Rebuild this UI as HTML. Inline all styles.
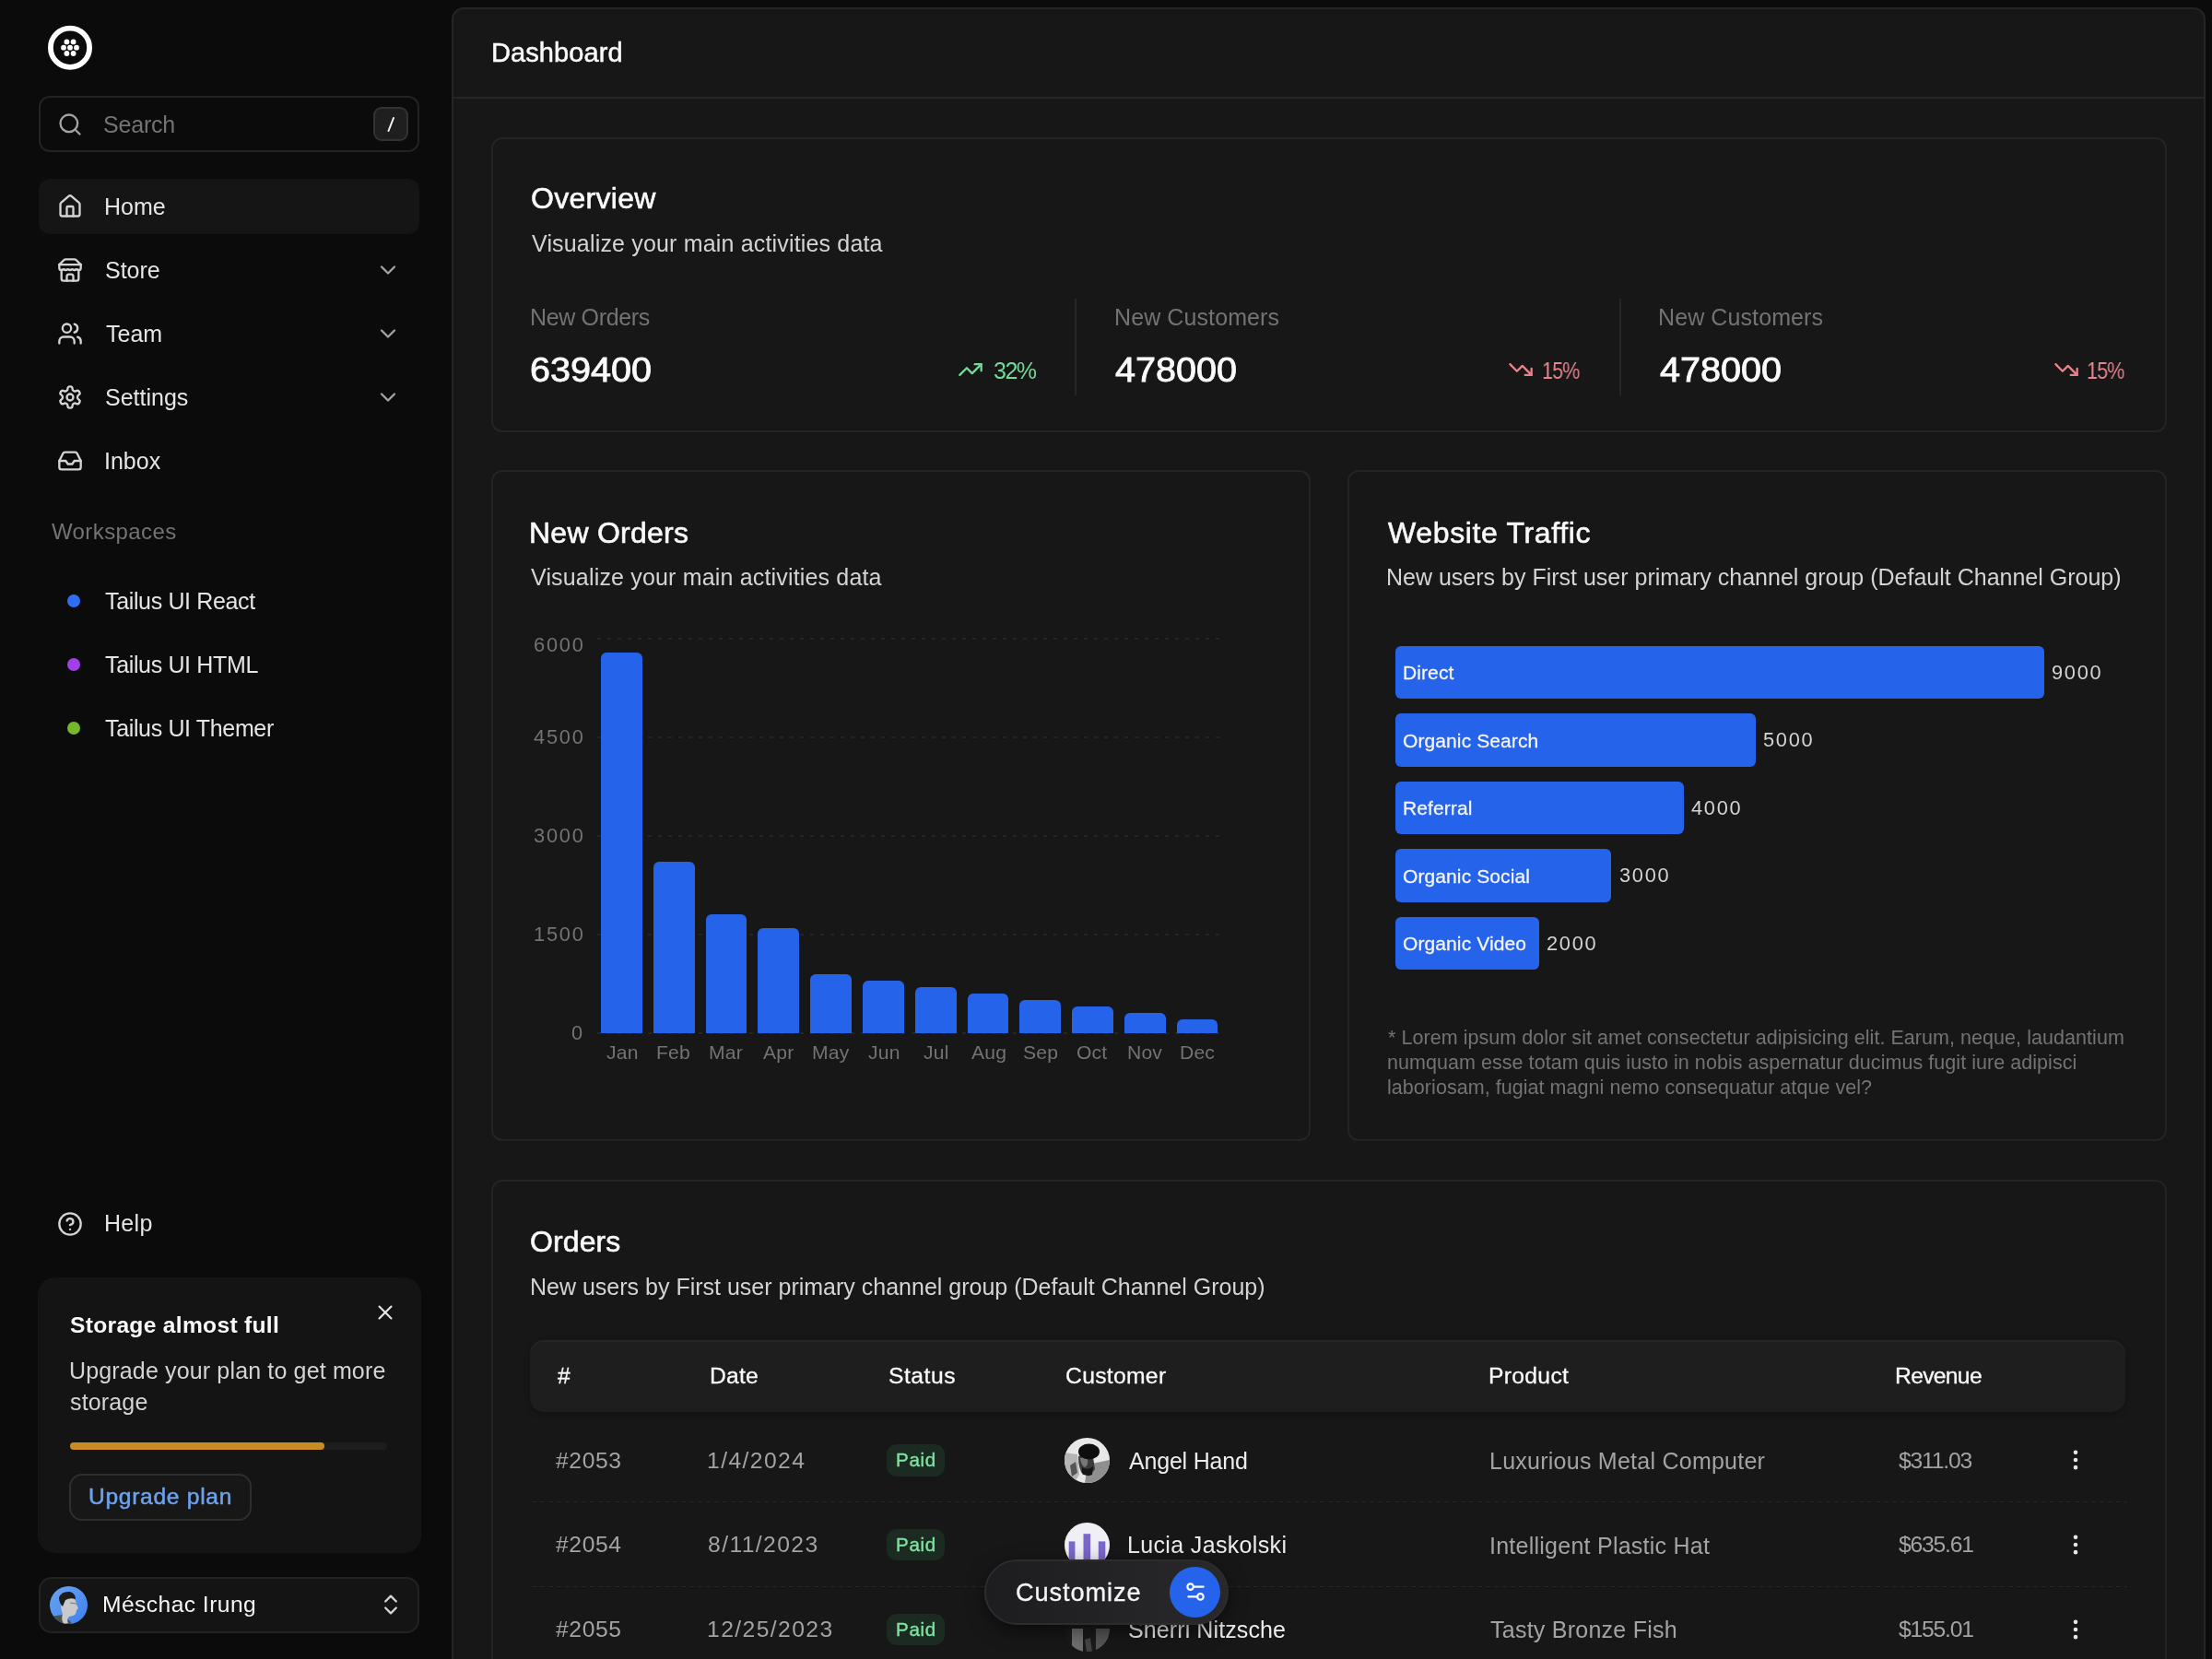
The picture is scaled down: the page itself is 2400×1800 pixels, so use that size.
<!DOCTYPE html>
<html><head><meta charset="utf-8"><style>
html,body{margin:0;padding:0;width:2400px;height:1800px;overflow:hidden;background:#0b0b0b;}
body{position:relative;font-family:"Liberation Sans",sans-serif;}
body>div{position:absolute;}
.t{white-space:pre;will-change:transform;}
</style></head><body><svg style="position:absolute;left:46px;top:22px" width="60" height="60" viewBox="0 0 60 60"><circle cx="30" cy="29.7" r="21.1" fill="none" stroke="#fff" stroke-width="5.8"/><circle cx="30" cy="29.7" r="2.9" fill="#fff"/><circle cx="23" cy="29.7" r="2.9" fill="#fff"/><circle cx="37" cy="29.7" r="2.9" fill="#fff"/><circle cx="26.4" cy="23.4" r="2.9" fill="#fff"/><circle cx="33.6" cy="23.4" r="2.9" fill="#fff"/><circle cx="26.4" cy="36.0" r="2.9" fill="#fff"/><circle cx="33.6" cy="36.0" r="2.9" fill="#fff"/></svg><div style="left:42px;top:104px;width:413px;height:61px;box-sizing:border-box;border:2px solid #232323;border-radius:12px;background:#0b0b0b"></div><svg style="position:absolute;left:61.5px;top:120.5px;" width="28" height="28" viewBox="0 0 24 24" fill="none" stroke="#a3a3a3" stroke-width="2" stroke-linecap="round" stroke-linejoin="round"><circle cx="11" cy="11" r="8"/><path d="m21 21-4.3-4.3"/></svg><div class="t" style="left:112.46px;top:118.53px;font-size:25px;line-height:32px;color:#737373;letter-spacing:-0.2px;">Search</div><div style="left:405px;top:116px;width:38px;height:37px;box-sizing:border-box;border:2px solid #333;border-radius:9px;background:#1f1f1f"></div><svg style="position:absolute;left:405px;top:116px" width="38" height="37"><line x1="22" y1="12" x2="16.5" y2="26" stroke="#f5f5f5" stroke-width="2" stroke-linecap="round"/></svg><div style="left:42px;top:194px;width:413px;height:60px;border-radius:12px;background:#151515"></div><svg style="position:absolute;left:62px;top:210px;" width="28" height="28" viewBox="0 0 24 24" fill="none" stroke="#d4d4d4" stroke-width="2" stroke-linecap="round" stroke-linejoin="round"><path d="M15 21v-8a1 1 0 0 0-1-1h-4a1 1 0 0 0-1 1v8"/><path d="M3 10a2 2 0 0 1 .709-1.528l7-5.999a2 2 0 0 1 2.582 0l7 5.999A2 2 0 0 1 21 10v9a2 2 0 0 1-2 2H5a2 2 0 0 1-2-2z"/></svg><div class="t" style="left:113.25px;top:207.83px;font-size:25px;line-height:32px;color:#e5e5e5;letter-spacing:0px;">Home</div><svg style="position:absolute;left:62px;top:279px;" width="28" height="28" viewBox="0 0 24 24" fill="none" stroke="#d4d4d4" stroke-width="2" stroke-linecap="round" stroke-linejoin="round"><path d="m2 7 4.41-4.41A2 2 0 0 1 7.83 2h8.34a2 2 0 0 1 1.42.59L22 7"/><path d="M4 12v8a2 2 0 0 0 2 2h12a2 2 0 0 0 2-2v-8"/><path d="M15 22v-4a2 2 0 0 0-2-2h-2a2 2 0 0 0-2 2v4"/><path d="M2 7h20"/><path d="M22 7v3a2 2 0 0 1-2 2a2.7 2.7 0 0 1-1.59-.63.7.7 0 0 0-.82 0A2.7 2.7 0 0 1 16 12a2.7 2.7 0 0 1-1.59-.63.7.7 0 0 0-.82 0A2.7 2.7 0 0 1 12 12a2.7 2.7 0 0 1-1.59-.63.7.7 0 0 0-.82 0A2.7 2.7 0 0 1 8 12a2.7 2.7 0 0 1-1.59-.63.7.7 0 0 0-.82 0A2.7 2.7 0 0 1 4 12a2 2 0 0 1-2-2V7"/></svg><div class="t" style="left:114.16px;top:276.83px;font-size:25px;line-height:32px;color:#e5e5e5;letter-spacing:0px;">Store</div><svg style="position:absolute;left:406.7px;top:279px;" width="28" height="28" viewBox="0 0 24 24" fill="none" stroke="#a3a3a3" stroke-width="2" stroke-linecap="round" stroke-linejoin="round"><path d="m6 9 6 6 6-6"/></svg><svg style="position:absolute;left:62px;top:348px;" width="28" height="28" viewBox="0 0 24 24" fill="none" stroke="#d4d4d4" stroke-width="2" stroke-linecap="round" stroke-linejoin="round"><path d="M16 21v-2a4 4 0 0 0-4-4H6a4 4 0 0 0-4 4v2"/><circle cx="9" cy="7" r="4"/><path d="M22 21v-2a4 4 0 0 0-3-3.87"/><path d="M16 3.13a4 4 0 0 1 0 7.75"/></svg><div class="t" style="left:114.74px;top:345.83px;font-size:25px;line-height:32px;color:#e5e5e5;letter-spacing:0px;">Team</div><svg style="position:absolute;left:406.7px;top:348px;" width="28" height="28" viewBox="0 0 24 24" fill="none" stroke="#a3a3a3" stroke-width="2" stroke-linecap="round" stroke-linejoin="round"><path d="m6 9 6 6 6-6"/></svg><svg style="position:absolute;left:62px;top:417px;" width="28" height="28" viewBox="0 0 24 24" fill="none" stroke="#d4d4d4" stroke-width="2" stroke-linecap="round" stroke-linejoin="round"><path d="M12.22 2h-.44a2 2 0 0 0-2 2v.18a2 2 0 0 1-1 1.73l-.43.25a2 2 0 0 1-2 0l-.15-.08a2 2 0 0 0-2.73.73l-.22.38a2 2 0 0 0 .73 2.73l.15.1a2 2 0 0 1 1 1.72v.51a2 2 0 0 1-1 1.74l-.15.09a2 2 0 0 0-.73 2.73l.22.38a2 2 0 0 0 2.73.73l.15-.08a2 2 0 0 1 2 0l.43.25a2 2 0 0 1 1 1.73V20a2 2 0 0 0 2 2h.44a2 2 0 0 0 2-2v-.18a2 2 0 0 1 1-1.73l.43-.25a2 2 0 0 1 2 0l.15.08a2 2 0 0 0 2.73-.73l.22-.39a2 2 0 0 0-.73-2.73l-.15-.08a2 2 0 0 1-1-1.74v-.5a2 2 0 0 1 1-1.74l.15-.09a2 2 0 0 0 .73-2.73l-.22-.38a2 2 0 0 0-2.73-.73l-.15.08a2 2 0 0 1-2 0l-.43-.25a2 2 0 0 1-1-1.73V4a2 2 0 0 0-2-2z"/><circle cx="12" cy="12" r="3"/></svg><div class="t" style="left:114.16px;top:414.83px;font-size:25px;line-height:32px;color:#e5e5e5;letter-spacing:0px;">Settings</div><svg style="position:absolute;left:406.7px;top:417px;" width="28" height="28" viewBox="0 0 24 24" fill="none" stroke="#a3a3a3" stroke-width="2" stroke-linecap="round" stroke-linejoin="round"><path d="m6 9 6 6 6-6"/></svg><svg style="position:absolute;left:62px;top:486.3px;" width="28" height="28" viewBox="0 0 24 24" fill="none" stroke="#d4d4d4" stroke-width="2" stroke-linecap="round" stroke-linejoin="round"><polyline points="22 12 16 12 14 15 10 15 8 12 2 12"/><path d="M5.45 5.11 2 12v6a2 2 0 0 0 2 2h16a2 2 0 0 0 2-2v-6l-3.45-6.89A2 2 0 0 0 16.76 4H7.24a2 2 0 0 0-1.79 1.11z"/></svg><div class="t" style="left:112.99px;top:484.13px;font-size:25px;line-height:32px;color:#e5e5e5;letter-spacing:0px;">Inbox</div><div class="t" style="left:56.19px;top:560.68px;font-size:24px;line-height:31px;color:#737373;letter-spacing:0.4px;">Workspaces</div><div style="left:72.5px;top:644.9px;width:14px;height:14px;border-radius:50%;background:#2f6df6"></div><div class="t" style="left:114.44px;top:635.83px;font-size:25px;line-height:32px;color:#e5e5e5;letter-spacing:-0.35px;">Tailus UI React</div><div style="left:72.5px;top:713.8px;width:14px;height:14px;border-radius:50%;background:#a23fe8"></div><div class="t" style="left:114.44px;top:704.73px;font-size:25px;line-height:32px;color:#e5e5e5;letter-spacing:-0.35px;">Tailus UI HTML</div><div style="left:72.5px;top:782.8px;width:14px;height:14px;border-radius:50%;background:#77b72c"></div><div class="t" style="left:114.44px;top:773.73px;font-size:25px;line-height:32px;color:#e5e5e5;letter-spacing:-0.35px;">Tailus UI Themer</div><svg style="position:absolute;left:61.7px;top:1313.5px;" width="28" height="28" viewBox="0 0 24 24" fill="none" stroke="#d4d4d4" stroke-width="2" stroke-linecap="round" stroke-linejoin="round"><circle cx="12" cy="12" r="10"/><path d="M9.09 9a3 3 0 0 1 5.83 1c0 2-3 3-3 3"/><path d="M12 17h.01"/></svg><div class="t" style="left:113.45px;top:1311.43px;font-size:25px;line-height:32px;color:#e5e5e5;letter-spacing:0.3px;">Help</div><div style="left:42px;top:1387px;width:414px;height:297px;border-radius:18px;background:#141414;box-shadow:0 0 0 1px #161616"></div><div class="t" style="left:75.99px;top:1422.07px;font-size:24.6px;line-height:32px;color:#fafafa;letter-spacing:0.3px;font-weight:700;">Storage almost full</div><svg style="position:absolute;left:404.5px;top:1411.3px;" width="26" height="26" viewBox="0 0 24 24" fill="none" stroke="#e5e5e5" stroke-width="1.9" stroke-linecap="round" stroke-linejoin="round"><path d="M18 6 6 18"/><path d="m6 6 12 12"/></svg><div class="t" style="left:74.77px;top:1470.63px;font-size:25px;line-height:32px;color:#d4d4d4;letter-spacing:0.15px;">Upgrade your plan to get more</div><div class="t" style="left:76.00px;top:1504.53px;font-size:25px;line-height:32px;color:#d4d4d4;letter-spacing:0.15px;">storage</div><div style="left:75.8px;top:1565px;width:344.2px;height:8px;border-radius:4px;background:#1d1d1d"></div><div style="left:75.8px;top:1565px;width:276.5px;height:8px;border-radius:4px;background:#c98c24"></div><div style="left:75px;top:1599px;width:198px;height:51px;box-sizing:border-box;border:2px solid #2e2e2e;border-radius:14px;background:#171717"></div><div class="t" style="left:95.70px;top:1608.07px;font-size:24.6px;line-height:32px;color:#6ea2ec;letter-spacing:0.7px;-webkit-text-stroke:0.5px #6ea2ec">Upgrade plan</div><div style="left:42px;top:1711px;width:413px;height:61px;box-sizing:border-box;border:2px solid #222;border-radius:14px;background:#141414"></div><svg style="position:absolute;left:53.5px;top:1720.5px" width="41" height="41" viewBox="0 0 41 41"><defs><clipPath id="ca"><circle cx="20.5" cy="20.5" r="20.5"/></clipPath><linearGradient id="gb" x1="0" y1="0" x2="1" y2="1"><stop offset="0" stop-color="#6aa6f2"/><stop offset="1" stop-color="#3d7ff0"/></linearGradient></defs><circle cx="20.5" cy="20.5" r="20.5" fill="url(#gb)"/><g clip-path="url(#ca)"><path d="M0 33 L14 31 L22 38 L24 41 L0 41z" fill="#4a4f4a"/><path d="M13 15 Q16 11 24 12 Q29 15 29 20 L31 24 L29 26 Q29 31 25 32 L21 33 Q18 36 20 40 L15 41 Q12 36 14 30 Q11 24 13 15z" fill="#c9cbcb"/><path d="M10 12 Q13 5 22 6 Q28 8 28 14 Q22 12 17 15 L14 22 Q10 18 10 12z" fill="#1b1c1e"/><path d="M22 18 L29 19" stroke="#777" stroke-width="1"/></g></svg><div class="t" style="left:111.48px;top:1725.17px;font-size:24.6px;line-height:32px;color:#f5f5f5;letter-spacing:0.45px;">Méschac Irung</div><svg style="position:absolute;left:410px;top:1727px;" width="28" height="28" viewBox="0 0 24 24" fill="none" stroke="#d4d4d4" stroke-width="2" stroke-linecap="round" stroke-linejoin="round"><path d="m7 15 5 5 5-5"/><path d="m7 9 5-5 5 5"/></svg><div style="left:490px;top:8px;width:1903px;height:1800px;box-sizing:border-box;border:2px solid #252525;border-bottom:none;border-radius:13px 13px 0 0;background:#171717"></div><div style="left:492px;top:105px;width:1899px;height:2px;background:#262626"></div><div class="t" style="left:532.52px;top:37.55px;font-size:29px;line-height:38px;color:#fafafa;letter-spacing:0.1px;-webkit-text-stroke:0.5px #fafafa">Dashboard</div><div style="left:533px;top:149px;width:1818px;height:320px;box-sizing:border-box;border:2px solid #242424;border-radius:12px;background:#171717"></div><div class="t" style="left:575.68px;top:194.11px;font-size:32px;line-height:42px;color:#fafafa;letter-spacing:0.3px;-webkit-text-stroke:0.6px #fafafa">Overview</div><div class="t" style="left:576.89px;top:247.63px;font-size:25px;line-height:32px;color:#d4d4d4;letter-spacing:0.17px;">Visualize your main activities data</div><div class="t" style="left:574.95px;top:327.93px;font-size:25px;line-height:32px;color:#737373;letter-spacing:-0.35px;">New Orders</div><div class="t" style="left:575.17px;top:378.02px;font-size:36px;line-height:47px;color:#fafafa;letter-spacing:0px;transform:scaleX(1.10);transform-origin:0 0;-webkit-text-stroke:0.8px #fafafa">639400</div><svg style="position:absolute;left:1038.8px;top:387px;" width="28" height="28" viewBox="0 0 24 24" fill="none" stroke="#74d897" stroke-width="2" stroke-linecap="round" stroke-linejoin="round"><polyline points="22 7 13.5 15.5 8.5 10.5 2 17"/><polyline points="16 7 22 7 22 13"/></svg><div class="t" style="left:1077.85px;top:385.83px;font-size:25px;line-height:32px;color:#74d897;letter-spacing:-1.5px;">32%</div><div class="t" style="left:1208.75px;top:327.93px;font-size:25px;line-height:32px;color:#737373;letter-spacing:0.1px;">New Customers</div><div class="t" style="left:1209.97px;top:378.02px;font-size:36px;line-height:47px;color:#fafafa;letter-spacing:0px;transform:scaleX(1.10);transform-origin:0 0;-webkit-text-stroke:0.8px #fafafa">478000</div><svg style="position:absolute;left:1636.3px;top:387px;" width="28" height="28" viewBox="0 0 24 24" fill="none" stroke="#e5838f" stroke-width="2" stroke-linecap="round" stroke-linejoin="round"><polyline points="22 17 13.5 8.5 8.5 13.5 2 7"/><polyline points="16 17 22 17 22 11"/></svg><div class="t" style="left:1673.30px;top:385.83px;font-size:25px;line-height:32px;color:#e5838f;letter-spacing:-1.0px;transform:scaleX(0.86);transform-origin:0 0">15%</div><div class="t" style="left:1799.35px;top:327.93px;font-size:25px;line-height:32px;color:#737373;letter-spacing:0.1px;">New Customers</div><div class="t" style="left:1800.57px;top:378.02px;font-size:36px;line-height:47px;color:#fafafa;letter-spacing:0px;transform:scaleX(1.10);transform-origin:0 0;-webkit-text-stroke:0.8px #fafafa">478000</div><svg style="position:absolute;left:2228.1000000000004px;top:387px;" width="28" height="28" viewBox="0 0 24 24" fill="none" stroke="#e5838f" stroke-width="2" stroke-linecap="round" stroke-linejoin="round"><polyline points="22 17 13.5 8.5 8.5 13.5 2 7"/><polyline points="16 17 22 17 22 11"/></svg><div class="t" style="left:2263.60px;top:385.83px;font-size:25px;line-height:32px;color:#e5838f;letter-spacing:-1.0px;transform:scaleX(0.86);transform-origin:0 0">15%</div><div style="left:1166.4px;top:323.6px;width:2px;height:105px;background:#262626"></div><div style="left:1757.4px;top:323.6px;width:2px;height:105px;background:#262626"></div><div style="left:533px;top:510px;width:889px;height:728px;box-sizing:border-box;border:2px solid #242424;border-radius:12px;background:#171717"></div><div class="t" style="left:573.88px;top:556.91px;font-size:32px;line-height:42px;color:#fafafa;letter-spacing:0.25px;-webkit-text-stroke:0.6px #fafafa">New Orders</div><div class="t" style="left:576.39px;top:610.03px;font-size:25px;line-height:32px;color:#d4d4d4;letter-spacing:0.17px;">Visualize your main activities data</div><div style="left:648px;top:692.3px;width:677px;height:2px;background:repeating-linear-gradient(90deg,#252525 0 4px,transparent 4px 11px)"></div><div class="t" style="left:578.66px;top:686.24px;font-size:21.8px;line-height:28px;color:#737373;letter-spacing:1.8px;">6000</div><div style="left:648px;top:799.2px;width:677px;height:2px;background:repeating-linear-gradient(90deg,#252525 0 4px,transparent 4px 11px)"></div><div class="t" style="left:578.66px;top:786.49px;font-size:21.8px;line-height:28px;color:#737373;letter-spacing:1.8px;">4500</div><div style="left:648px;top:906.0px;width:677px;height:2px;background:repeating-linear-gradient(90deg,#252525 0 4px,transparent 4px 11px)"></div><div class="t" style="left:578.66px;top:893.34px;font-size:21.8px;line-height:28px;color:#737373;letter-spacing:1.8px;">3000</div><div style="left:648px;top:1012.9px;width:677px;height:2px;background:repeating-linear-gradient(90deg,#252525 0 4px,transparent 4px 11px)"></div><div class="t" style="left:578.66px;top:1000.19px;font-size:21.8px;line-height:28px;color:#737373;letter-spacing:1.8px;">1500</div><div style="left:648px;top:1119.7px;width:677px;height:2px;background:repeating-linear-gradient(90deg,#252525 0 4px,transparent 4px 11px)"></div><div class="t" style="left:620.43px;top:1107.04px;font-size:21.8px;line-height:28px;color:#737373;letter-spacing:1.8px;">0</div><div style="left:652.00px;top:707.55px;width:44.8px;height:413.15px;background:#2563eb;border-radius:6px 6px 0 0"></div><div class="t" style="left:657.71px;top:1128.38px;font-size:21.1px;line-height:27px;color:#737373;letter-spacing:0.2px;">Jan</div><div style="left:708.79px;top:935.49px;width:44.8px;height:185.21px;background:#2563eb;border-radius:6px 6px 0 0"></div><div class="t" style="left:712.39px;top:1128.38px;font-size:21.1px;line-height:27px;color:#737373;letter-spacing:0.2px;">Feb</div><div style="left:765.58px;top:992.48px;width:44.8px;height:128.22px;background:#2563eb;border-radius:6px 6px 0 0"></div><div class="t" style="left:768.92px;top:1128.38px;font-size:21.1px;line-height:27px;color:#737373;letter-spacing:0.2px;">Mar</div><div style="left:822.37px;top:1006.73px;width:44.8px;height:113.97px;background:#2563eb;border-radius:6px 6px 0 0"></div><div class="t" style="left:828.31px;top:1128.38px;font-size:21.1px;line-height:27px;color:#737373;letter-spacing:0.2px;">Apr</div><div style="left:879.16px;top:1056.59px;width:44.8px;height:64.11px;background:#2563eb;border-radius:6px 6px 0 0"></div><div class="t" style="left:880.58px;top:1128.38px;font-size:21.1px;line-height:27px;color:#737373;letter-spacing:0.2px;">May</div><div style="left:935.95px;top:1063.71px;width:44.8px;height:56.99px;background:#2563eb;border-radius:6px 6px 0 0"></div><div class="t" style="left:941.66px;top:1128.38px;font-size:21.1px;line-height:27px;color:#737373;letter-spacing:0.2px;">Jun</div><div style="left:992.74px;top:1070.84px;width:44.8px;height:49.86px;background:#2563eb;border-radius:6px 6px 0 0"></div><div class="t" style="left:1001.99px;top:1128.38px;font-size:21.1px;line-height:27px;color:#737373;letter-spacing:0.2px;">Jul</div><div style="left:1049.53px;top:1077.96px;width:44.8px;height:42.74px;background:#2563eb;border-radius:6px 6px 0 0"></div><div class="t" style="left:1053.62px;top:1128.38px;font-size:21.1px;line-height:27px;color:#737373;letter-spacing:0.2px;">Aug</div><div style="left:1106.32px;top:1085.08px;width:44.8px;height:35.62px;background:#2563eb;border-radius:6px 6px 0 0"></div><div class="t" style="left:1109.71px;top:1128.38px;font-size:21.1px;line-height:27px;color:#737373;letter-spacing:0.2px;">Sep</div><div style="left:1163.11px;top:1092.21px;width:44.8px;height:28.49px;background:#2563eb;border-radius:6px 6px 0 0"></div><div class="t" style="left:1168.48px;top:1128.38px;font-size:21.1px;line-height:27px;color:#737373;letter-spacing:0.2px;">Oct</div><div style="left:1219.90px;top:1099.33px;width:44.8px;height:21.37px;background:#2563eb;border-radius:6px 6px 0 0"></div><div class="t" style="left:1222.51px;top:1128.38px;font-size:21.1px;line-height:27px;color:#737373;letter-spacing:0.2px;">Nov</div><div style="left:1276.69px;top:1106.45px;width:44.8px;height:14.25px;background:#2563eb;border-radius:6px 6px 0 0"></div><div class="t" style="left:1279.54px;top:1128.38px;font-size:21.1px;line-height:27px;color:#737373;letter-spacing:0.2px;">Dec</div><div style="left:1462px;top:510px;width:889px;height:728px;box-sizing:border-box;border:2px solid #242424;border-radius:12px;background:#171717"></div><div class="t" style="left:1506.36px;top:556.91px;font-size:32px;line-height:42px;color:#fafafa;letter-spacing:0.65px;-webkit-text-stroke:0.6px #fafafa">Website Traffic</div><div class="t" style="left:1504.45px;top:610.03px;font-size:25px;line-height:32px;color:#d4d4d4;letter-spacing:0.0px;">New users by First user primary channel group (Default Channel Group)</div><div style="left:1513.6px;top:700.60px;width:704.25px;height:57.9px;background:#2563eb;border-radius:6px"></div><div class="t" style="left:1521.58px;top:716.12px;font-size:21px;line-height:27px;color:#f5f5f5;letter-spacing:0.1px;-webkit-text-stroke:0.3px #f5f5f5">Direct</div><div class="t" style="left:2225.83px;top:715.54px;font-size:21.8px;line-height:28px;color:#d4d4d4;letter-spacing:1.7px;">9000</div><div style="left:1513.6px;top:774.10px;width:391.25px;height:57.9px;background:#2563eb;border-radius:6px"></div><div class="t" style="left:1522.31px;top:789.62px;font-size:21px;line-height:27px;color:#f5f5f5;letter-spacing:0.1px;-webkit-text-stroke:0.3px #f5f5f5">Organic Search</div><div class="t" style="left:1912.98px;top:789.04px;font-size:21.8px;line-height:28px;color:#d4d4d4;letter-spacing:1.7px;">5000</div><div style="left:1513.6px;top:847.60px;width:313.00px;height:57.9px;background:#2563eb;border-radius:6px"></div><div class="t" style="left:1521.58px;top:863.12px;font-size:21px;line-height:27px;color:#f5f5f5;letter-spacing:0.1px;-webkit-text-stroke:0.3px #f5f5f5">Referral</div><div class="t" style="left:1835.10px;top:862.54px;font-size:21.8px;line-height:28px;color:#d4d4d4;letter-spacing:1.7px;">4000</div><div style="left:1513.6px;top:921.10px;width:234.75px;height:57.9px;background:#2563eb;border-radius:6px"></div><div class="t" style="left:1522.31px;top:936.62px;font-size:21px;line-height:27px;color:#f5f5f5;letter-spacing:0.1px;-webkit-text-stroke:0.3px #f5f5f5">Organic Social</div><div class="t" style="left:1756.52px;top:936.04px;font-size:21.8px;line-height:28px;color:#d4d4d4;letter-spacing:1.7px;">3000</div><div style="left:1513.6px;top:994.60px;width:156.50px;height:57.9px;background:#2563eb;border-radius:6px"></div><div class="t" style="left:1522.31px;top:1010.12px;font-size:21px;line-height:27px;color:#f5f5f5;letter-spacing:0.1px;-webkit-text-stroke:0.3px #f5f5f5">Organic Video</div><div class="t" style="left:1678.00px;top:1009.54px;font-size:21.8px;line-height:28px;color:#d4d4d4;letter-spacing:1.7px;">2000</div><div class="t" style="left:1506.15px;top:1111.55px;font-size:21.5px;line-height:28px;color:#737373;letter-spacing:0.05px;">* Lorem ipsum dolor sit amet consectetur adipisicing elit. Earum, neque, laudantium</div><div class="t" style="left:1505.07px;top:1138.75px;font-size:21.5px;line-height:28px;color:#737373;letter-spacing:0.05px;">numquam esse totam quis iusto in nobis aspernatur ducimus fugit iure adipisci</div><div class="t" style="left:1505.05px;top:1165.95px;font-size:21.5px;line-height:28px;color:#737373;letter-spacing:0.05px;">laboriosam, fugiat magni nemo consequatur atque vel?</div><div style="left:533px;top:1280px;width:1818px;height:600px;box-sizing:border-box;border:2px solid #242424;border-radius:12px;background:#171717"></div><div class="t" style="left:575.48px;top:1325.71px;font-size:32px;line-height:42px;color:#fafafa;letter-spacing:0.1px;-webkit-text-stroke:0.6px #fafafa">Orders</div><div class="t" style="left:574.95px;top:1379.63px;font-size:25px;line-height:32px;color:#d4d4d4;letter-spacing:0.0px;">New users by First user primary channel group (Default Channel Group)</div><div style="left:574.5px;top:1453.6px;width:1731.5px;height:78.5px;border-radius:15px;background:#1e1e1e;box-shadow:inset 0 2px 0 #242424,0 3px 6px rgba(0,0,0,.25)"></div><div class="t" style="left:604.89px;top:1477.24px;font-size:24.7px;line-height:32px;color:#fafafa;letter-spacing:0px;-webkit-text-stroke:0.3px #fafafa">#</div><div class="t" style="left:770.27px;top:1477.24px;font-size:24.7px;line-height:32px;color:#fafafa;letter-spacing:0.2px;-webkit-text-stroke:0.3px #fafafa">Date</div><div class="t" style="left:963.98px;top:1477.24px;font-size:24.7px;line-height:32px;color:#fafafa;letter-spacing:0.5px;-webkit-text-stroke:0.3px #fafafa">Status</div><div class="t" style="left:1156.45px;top:1477.24px;font-size:24.7px;line-height:32px;color:#fafafa;letter-spacing:0.3px;-webkit-text-stroke:0.3px #fafafa">Customer</div><div class="t" style="left:1614.57px;top:1477.24px;font-size:24.7px;line-height:32px;color:#fafafa;letter-spacing:0.3px;-webkit-text-stroke:0.3px #fafafa">Product</div><div class="t" style="left:2056.47px;top:1477.24px;font-size:24.7px;line-height:32px;color:#fafafa;letter-spacing:-0.7px;-webkit-text-stroke:0.3px #fafafa">Revenue</div><div class="t" style="left:603.39px;top:1568.74px;font-size:24.7px;line-height:32px;color:#a3a3a3;letter-spacing:0.6px;">#2053</div><div class="t" style="left:767.02px;top:1568.74px;font-size:24.7px;line-height:32px;color:#a3a3a3;letter-spacing:1.4px;">1/4/2024</div><div style="left:962.2px;top:1567.3999999999999px;width:63.3px;height:34.3px;border-radius:11px;background:#1c2b21"></div><div class="t" style="left:971.81px;top:1570.46px;font-size:20.6px;line-height:27px;color:#7ee2a0;letter-spacing:0.7px;-webkit-text-stroke:0.4px #7ee2a0">Paid</div><div class="t" style="left:1224.75px;top:1568.63px;font-size:25px;line-height:32px;color:#ededed;letter-spacing:-0.2px;">Angel Hand</div><div class="t" style="left:1615.95px;top:1569.13px;font-size:25px;line-height:32px;color:#a3a3a3;letter-spacing:0.25px;">Luxurious Metal Computer</div><div class="t" style="left:2059.73px;top:1568.74px;font-size:24.7px;line-height:32px;color:#a3a3a3;letter-spacing:-1.2px;">$311.03</div><svg style="position:absolute;left:2237.6px;top:1570.3px;" width="28" height="28" viewBox="0 0 24 24" fill="none" stroke="#e5e5e5" stroke-width="2" stroke-linecap="round" stroke-linejoin="round"><circle cx="12" cy="12" r="1"/><circle cx="12" cy="5" r="1"/><circle cx="12" cy="19" r="1"/></svg><div style="left:577px;top:1628.9px;width:1731px;height:1.5px;background:repeating-linear-gradient(90deg,#262626 0 5px,transparent 5px 9px)"></div><svg style="position:absolute;left:1155px;top:1559.9px" width="49" height="49" viewBox="0 0 49 49"><defs><clipPath id="c0"><circle cx="24.5" cy="24.5" r="24.5"/></clipPath></defs><circle cx="24.5" cy="24.5" r="24.5" fill="#e8e8e8"/><g clip-path="url(#c0)"><path d="M0 16 L14 18 L16 40 L10 49 L0 49z" fill="#b5b5b5"/><path d="M6 30 L12 26 L14 38 L8 42z" fill="#555"/><path d="M30 28 L49 24 L49 49 L22 49 L24 36z" fill="#8f8f8f"/><path d="M15 20 Q22 17 31 21 L33 34 Q28 42 20 40 Q15 34 15 20z" fill="#3a3a3a"/><path d="M17 22 Q21 20 25 23 Q26 30 22 32 Q18 30 17 22z" fill="#777"/><ellipse cx="26.5" cy="15" rx="11.5" ry="8.5" fill="#0e0e0e"/><path d="M19 32 Q25 36 31 31 L30 40 Q24 43 19 38z" fill="#151515"/></g></svg><div class="t" style="left:603.39px;top:1660.39px;font-size:24.7px;line-height:32px;color:#a3a3a3;letter-spacing:0.6px;">#2054</div><div class="t" style="left:767.83px;top:1660.39px;font-size:24.7px;line-height:32px;color:#a3a3a3;letter-spacing:1.4px;">8/11/2023</div><div style="left:962.2px;top:1659.05px;width:63.3px;height:34.3px;border-radius:11px;background:#1c2b21"></div><div class="t" style="left:971.81px;top:1662.11px;font-size:20.6px;line-height:27px;color:#7ee2a0;letter-spacing:0.7px;-webkit-text-stroke:0.4px #7ee2a0">Paid</div><div class="t" style="left:1222.75px;top:1660.28px;font-size:25px;line-height:32px;color:#ededed;letter-spacing:0.35px;">Lucia Jaskolski</div><div class="t" style="left:1615.69px;top:1660.78px;font-size:25px;line-height:32px;color:#a3a3a3;letter-spacing:0.25px;">Intelligent Plastic Hat</div><div class="t" style="left:2059.73px;top:1660.39px;font-size:24.7px;line-height:32px;color:#a3a3a3;letter-spacing:-1.2px;">$635.61</div><svg style="position:absolute;left:2237.6px;top:1661.95px;" width="28" height="28" viewBox="0 0 24 24" fill="none" stroke="#e5e5e5" stroke-width="2" stroke-linecap="round" stroke-linejoin="round"><circle cx="12" cy="12" r="1"/><circle cx="12" cy="5" r="1"/><circle cx="12" cy="19" r="1"/></svg><div style="left:577px;top:1720.5px;width:1731px;height:1.5px;background:repeating-linear-gradient(90deg,#262626 0 5px,transparent 5px 9px)"></div><svg style="position:absolute;left:1155px;top:1651.5px" width="49" height="49" viewBox="0 0 49 49"><defs><clipPath id="c1"><circle cx="24.5" cy="24.5" r="24.5"/></clipPath></defs><circle cx="24.5" cy="24.5" r="24.5" fill="#f1eff6"/><g clip-path="url(#c1)" fill="#7b67c9"><rect x="4.7" y="20.4" width="6.7" height="30"/><rect x="20.5" y="12.2" width="7.6" height="40"/><rect x="36.8" y="20.4" width="7.5" height="30"/></g></svg><div class="t" style="left:603.39px;top:1752.04px;font-size:24.7px;line-height:32px;color:#a3a3a3;letter-spacing:0.6px;">#2055</div><div class="t" style="left:767.02px;top:1752.04px;font-size:24.7px;line-height:32px;color:#a3a3a3;letter-spacing:1.4px;">12/25/2023</div><div style="left:962.2px;top:1750.6999999999998px;width:63.3px;height:34.3px;border-radius:11px;background:#1c2b21"></div><div class="t" style="left:971.81px;top:1753.76px;font-size:20.6px;line-height:27px;color:#7ee2a0;letter-spacing:0.7px;-webkit-text-stroke:0.4px #7ee2a0">Paid</div><div class="t" style="left:1223.66px;top:1751.93px;font-size:25px;line-height:32px;color:#ededed;letter-spacing:0.1px;">Sherri Nitzsche</div><div class="t" style="left:1617.44px;top:1752.43px;font-size:25px;line-height:32px;color:#a3a3a3;letter-spacing:0.25px;">Tasty Bronze Fish</div><div class="t" style="left:2059.73px;top:1752.04px;font-size:24.7px;line-height:32px;color:#a3a3a3;letter-spacing:-1.2px;">$155.01</div><svg style="position:absolute;left:2237.6px;top:1753.6px;" width="28" height="28" viewBox="0 0 24 24" fill="none" stroke="#e5e5e5" stroke-width="2" stroke-linecap="round" stroke-linejoin="round"><circle cx="12" cy="12" r="1"/><circle cx="12" cy="5" r="1"/><circle cx="12" cy="19" r="1"/></svg><svg style="position:absolute;left:1155px;top:1743.2px" width="49" height="49" viewBox="0 0 49 49"><defs><clipPath id="c2"><circle cx="24.5" cy="24.5" r="24.5"/></clipPath></defs><circle cx="24.5" cy="24.5" r="24.5" fill="#1a1a1a"/><g clip-path="url(#c2)"><path d="M8 24 L20 24 L20 49 L8 49z" fill="#6e6e6e"/><path d="M34 24 L49 24 L49 49 L34 49z" fill="#555"/><path d="M22 36 L28 34 L30 49 L24 49z" fill="#444"/></g></svg><div style="left:1067.6px;top:1691.5px;width:265.2px;height:71.5px;box-sizing:border-box;border-radius:36px;background:linear-gradient(90deg,#1d1d1f,#29292b);border:2px solid #2c2c2e;box-shadow:0 6px 20px rgba(0,0,0,.5)"></div><div class="t" style="left:1101.82px;top:1709.77px;font-size:27.2px;line-height:35px;color:#f5f5f5;letter-spacing:0.9px;-webkit-text-stroke:0.3px #f5f5f5">Customize</div><div style="left:1269px;top:1699.7px;width:55px;height:55px;border-radius:50%;background:#2563eb"></div><svg style="position:absolute;left:1283.5px;top:1714.3px;" width="26" height="26" viewBox="0 0 24 24" fill="none" stroke="#fff" stroke-width="2" stroke-linecap="round" stroke-linejoin="round"><path d="M20 7h-9"/><path d="M14 17H5"/><circle cx="17" cy="17" r="3"/><circle cx="7" cy="7" r="3"/></svg></body></html>
